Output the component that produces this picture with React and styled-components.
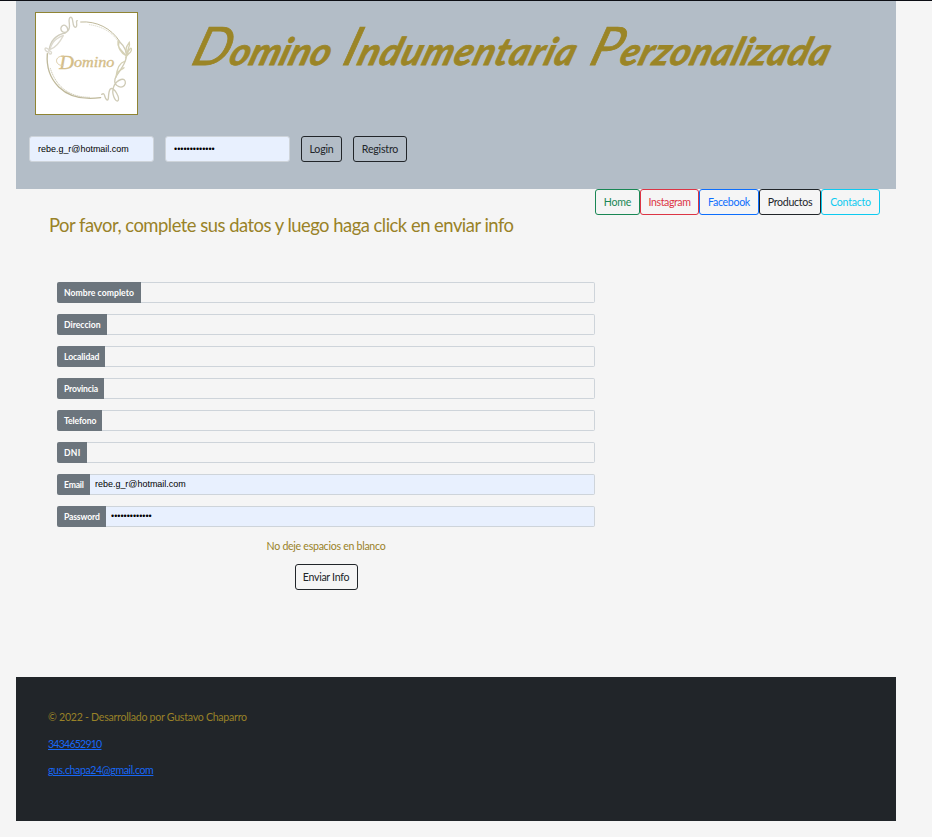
import React from "react";
import styled, { createGlobalStyle } from "styled-components";

const GlobalStyle = createGlobalStyle`
  *, *::before, *::after { box-sizing: border-box; }
  body {
    margin: 0;
    background: #f5f5f5;
    border-top: 1px solid #0c0e14;
    color: #998228;
    font: 400 10.6px/17px "Gill Sans MT", Lato, sans-serif;
  }
`;

const Page = styled.div`
  width: 880px;
  margin-left: 16px;
`;

const Header = styled.header`
  height: 188px;
  padding: 11px 13px 0 19px;
  background: #b3bdc7;
`;

const Brand = styled.div`
  display: flex;
  align-items: flex-start;
`;

const Logo = styled.svg`
  flex: none;
  width: 103px;
  height: 103px;
  border: 1px solid #8f8433;
  background: #fff;
`;

const Title = styled.h1`
  display: flex;
  margin: 3px 0 0 53px;
  font: italic 700 38px/60px Lato, cursive;
  color: #9b8526;
  -webkit-text-stroke: 0.8px #9b8526;
`;

const Word = styled.span`
  display: block;
  flex: none;
  width: ${(p) => p.$width}px;
  letter-spacing: ${(p) => p.$spacing}px;
  white-space: nowrap;
  transform: skewX(-18deg);
  transform-origin: 0 70%;
  &::first-letter { font-size: 53px; font-weight: 400; }
`;

const LoginForm = styled.form`
  display: flex;
  gap: 11px;
  margin: 21px 0 0 -6px;
`;

const LoginInput = styled.input`
  width: 125px;
  height: 26px;
  padding: 0 8px 1px;
  border: 1px solid #ced4da;
  border-radius: 3px;
  outline: none;
  background: #e8f0fe;
  color: #000;
  font: 8.96px "Liberation Sans", Arial, sans-serif;
`;

const Button = styled.button`
  width: ${(p) => p.$width}px;
  height: 26px;
  padding: 1px 0 0;
  border: 1px solid currentColor;
  border-radius: 3px;
  background: transparent;
  color: ${(p) => p.$color || "#212529"};
  font: inherit;
  letter-spacing: ${(p) => p.$spacing || 0}px;
  white-space: nowrap;
`;

const Nav = styled.nav`
  display: flex;
  justify-content: flex-end;
  padding-right: 16px;
`;

const Main = styled.main`
  display: flow-root;
  height: 462px;
`;

const Heading = styled.h2`
  margin: -1px 0 0 33px;
  font-size: 18.4px;
  font-weight: 400;
  line-height: 22px;
  letter-spacing: -0.5px;
  white-space: nowrap;
`;

const Form = styled.form`
  display: flex;
  flex-direction: column;
  gap: 11px;
  width: 538px;
  margin: 46px 0 0 41px;
`;

const Row = styled.label`
  display: flex;
  height: 21px;
`;

const RowLabel = styled.span`
  flex: none;
  width: ${(p) => p.$width}px;
  padding-left: 7px;
  border-radius: 2px 0 0 2px;
  background: #6c757d;
  color: #fff;
  font-size: 8.6px;
  font-weight: 700;
  line-height: 22px;
  white-space: nowrap;
  letter-spacing: ${(p) => p.$spacing || 0}px;
`;

const RowInput = styled.input`
  flex: 1;
  min-width: 0;
  padding: 0 5px 1px;
  border: 1px solid #ced4da;
  border-left: 0;
  border-radius: 0 2px 2px 0;
  outline: none;
  background: ${(p) => (p.$filled ? "#e8f0fe" : "transparent")};
  color: #000;
  font: 8.96px "Liberation Sans", Arial, sans-serif;
`;

const FormEnd = styled.div`
  display: flex;
  flex-direction: column;
  align-items: center;
  gap: 9px;
`;

const Note = styled.p`
  margin: 0;
  letter-spacing: -0.28px;
`;

const Footer = styled.footer`
  display: flex;
  flex-direction: column;
  align-items: flex-start;
  gap: 10px;
  height: 144px;
  padding: 32px;
  background: #212529;
  line-height: 16.6px;
`;

const FooterText = styled.span`
  letter-spacing: -0.26px;
`;

const FooterLink = styled.a`
  color: #1767f5;
  letter-spacing: ${(p) => p.$spacing || 0}px;
`;

const NAV = [
  ["Home", 45, "#198754", -0.15],
  ["Instagram", 59, "#dc3545", -0.42],
  ["Facebook", 60, "#0d6efd", -0.32],
  ["Productos", 62, "#212529", -0.3],
  ["Contacto", 59, "#0dcaf0", -0.25],
];

const FIELDS = [
  ["Nombre completo", 84, "text", "", 0.05],
  ["Direccion", 50, "text", "", 0],
  ["Localidad", 48, "text", "", -0.1],
  ["Provincia", 47, "text", "", -0.15],
  ["Telefono", 45, "text", "", -0.1],
  ["DNI", 30, "text", "", 0.3],
  ["Email", 33, "email", "rebe.g_r@hotmail.com", -0.2],
  ["Password", 49, "password", "contrasenia13", -0.15],
];

function DominoLogo() {
  return (
    <Logo viewBox="108 39 303 303" role="img" aria-label="Domino">
      <g fill="none" stroke="#cfcbb6" strokeWidth="3" strokeLinecap="round">
        <path d="M242 66C290 62 335 86 358 123" stroke="#bfb99b" />
        <path d="M142 161C136 235 186 309 302 293" stroke="#bfb99b" strokeWidth="4" />
        <path d="M268 74C306 79 335 96 353 122" strokeWidth="2" strokeDasharray="2 4" />
        <path d="M151 205C169 262 210 293 272 292" strokeWidth="3" strokeDasharray="2 4" />
        <path d="M147 153C151 120 169 104 196 99C211 91 198 69 187 77C175 88 190 105 204 92C216 80 200 58 211 52C222 49 215 81 226 82C236 80 225 62 232 62" stroke="#d0cdbd" strokeWidth="4" />
        <path d="M147 157C129 151 133 135 149 151C153 134 159 120 188 107M151 148C168 143 180 126 190 107M147 161C153 165 159 157 150 153" stroke="#dddacf" strokeWidth="4" />
        <path d="M356 122C371 136 384 153 378 176C373 201 350 220 345 237C340 260 371 271 376 250C378 229 351 237 341 260C333 281 346 306 353 303C362 296 342 258 331 267C322 278 329 301 321 300C312 297 317 275 305 283" strokeWidth="4" />
        <path d="M381 166C373 146 382 136 388 127C392 137 380 150 381 166C385 146 397 138 394 151C391 162 381 160 377 174M354 123C351 141 364 151 376 164M358 126C350 142 365 161 377 166M374 184C357 188 351 207 348 231M372 203C365 210 356 209 353 219" stroke="#d5d1b5" strokeWidth="4" />
      </g>
      <text x="178" y="202" fill="#d4bd88" stroke="#d4bd88" strokeWidth="1" fontFamily="Liberation Serif, serif" fontStyle="italic" fontSize="43" textLength="165" lengthAdjust="spacingAndGlyphs">
        <tspan fontSize="54" dy="4">D</tspan>
        <tspan dy="-4">omino</tspan>
      </text>
      <path d="M190 196C165 199 160 167 192 168" fill="none" stroke="#dccba4" strokeWidth="3" />
    </Logo>
  );
}

export default function App() {
  return (
    <>
      <GlobalStyle />
      <Page>
        <Header>
          <Brand>
            <DominoLogo />
            <Title>
              <Word $width={151} $spacing={0.1}>Domino</Word>
              <Word $width={247} $spacing={1}>Indumentaria</Word>
              <Word $width={245} $spacing={0.5}>Perzonalizada</Word>
            </Title>
          </Brand>
          <LoginForm>
            <LoginInput type="email" defaultValue="rebe.g_r@hotmail.com" />
            <LoginInput type="password" defaultValue="contrasenia13" />
            <Button type="button" $width={41} $spacing={-0.2}>Login</Button>
            <Button type="button" $width={54} $spacing={-0.2}>Registro</Button>
          </LoginForm>
        </Header>
        <Nav>
          {NAV.map(([name, width, color, spacing]) => (
            <Button key={name} type="button" $width={width} $color={color} $spacing={spacing}>{name}</Button>
          ))}
        </Nav>
        <Main>
          <Heading>Por favor, complete sus datos y luego haga click en enviar info</Heading>
          <Form>
            {FIELDS.map(([name, width, type, value, spacing]) => (
              <Row key={name}>
                <RowLabel $width={width} $spacing={spacing}>{name}</RowLabel>
                <RowInput type={type} defaultValue={value} $filled={value !== ""} />
              </Row>
            ))}
            <FormEnd>
              <Note>No deje espacios en blanco</Note>
              <Button type="button" $width={63} $spacing={-0.3}>Enviar Info</Button>
            </FormEnd>
          </Form>
        </Main>
        <Footer>
          <FooterText>© 2022 - Desarrollado por Gustavo Chaparro</FooterText>
          <FooterLink href="#tel" $spacing={-0.8}>3434652910</FooterLink>
          <FooterLink href="#mail" $spacing={-0.4}>gus.chapa24@gmail.com</FooterLink>
        </Footer>
      </Page>
    </>
  );
}
